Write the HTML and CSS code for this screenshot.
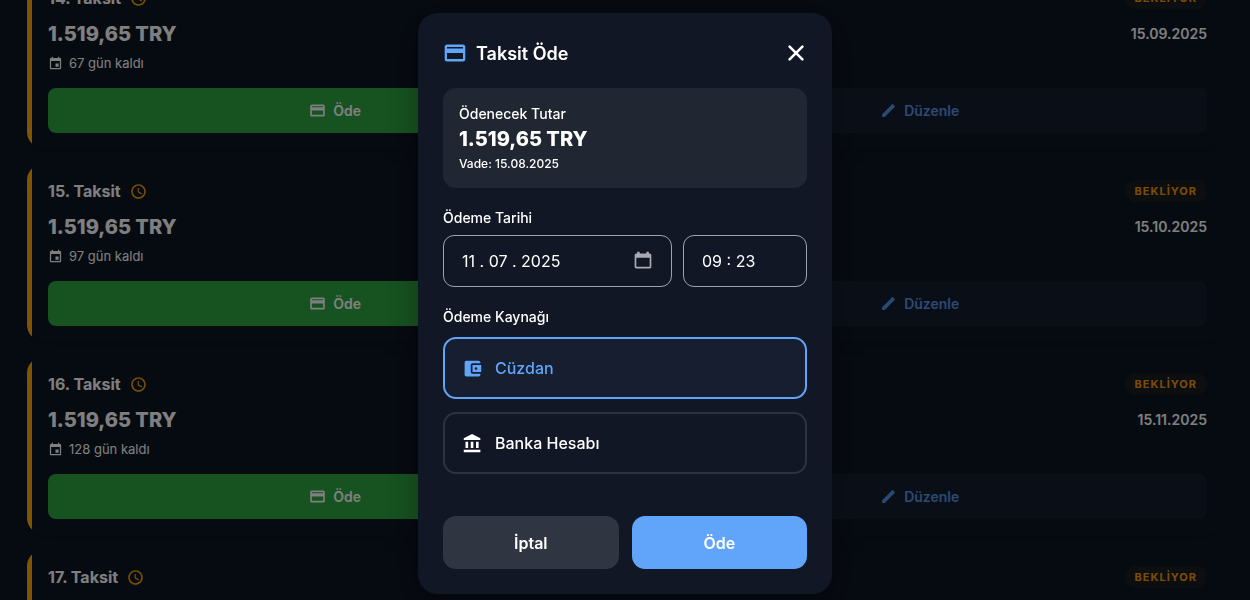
FILE: index.html
```html
<!DOCTYPE html>
<html lang="tr">
<head>
    <meta charset="UTF-8">
    <meta name="viewport" content="width=device-width, initial-scale=1.0">
    <title>Taksit Öde</title>
    <link rel="stylesheet" href="styles.css">
</head>
<body>

<!-- İkonlar -->
<svg class="sprite" aria-hidden="true">
    <symbol id="icon-card" viewBox="0 0 24 24"><path d="M20 3.500H4c-1.300 0-2.300 1-2.300 2.300v12.400c0 1.300 1 2.300 2.300 2.300h16c1.300 0 2.300-1 2.300-2.300V5.800c0-1.300-1-2.300-2.300-2.300zM20 18H4v-6h16v6zM20 7.500H4V6h16v1.500z"/></symbol>
    <symbol id="icon-clock" viewBox="0 0 24 24"><path d="M12 1.700C6.300 1.700 1.700 6.300 1.700 12S6.300 22.300 12 22.300 22.300 17.700 22.300 12 17.700 1.700 12 1.700zM12 20c-4.420 0-8-3.580-8-8s3.580-8 8-8 8 3.580 8 8-3.580 8-8 8zm.5-13H10.800v6l5.450 3.300.95-1.600-4.700-2.700z"/></symbol>
    <symbol id="icon-event" viewBox="0 0 24 24"><path d="M17 12h-5v5h5v-5zM16 1v2H8V1H6v2H5c-1.110 0-1.990.9-1.990 2L3 19c0 1.100.89 2 2 2h14c1.100 0 2-.9 2-2V5c0-1.100-.9-2-2-2h-1V1h-2zm3 18H5V8h14v11z"/></symbol>
    <symbol id="icon-edit" viewBox="0 0 24 24"><path d="M3 17.250V21h3.750L17.810 9.940l-3.750-3.750L3 17.250zM20.710 7.040c.39-.39.39-1.020 0-1.410l-2.340-2.340c-.39-.39-1.020-.39-1.410 0L14.060 6.190l3.750 3.750 2.900-2.900z"/></symbol>
    <symbol id="icon-close" viewBox="0 0 24 24"><path d="M5 5l14 14M19 5L5 19" fill="none" stroke="currentColor" stroke-width="2.8" stroke-linecap="round"/></symbol>
    <symbol id="icon-calendar" viewBox="0 0 24 24"><path d="M20 3h-1V1h-3v2H8V1H5v2H4c-1.100 0-2 .9-2 2v14c0 1.100.9 2 2 2h16c1.100 0 2-.9 2-2V5c0-1.100-.9-2-2-2zm0 16H4V8h16v11z"/></symbol>
    <symbol id="icon-wallet" viewBox="0 0 24 24"><path d="M21 18v1c0 1.100-.9 2-2 2H5c-1.110 0-2-.9-2-2V5c0-1.100.89-2 2-2h14c1.100 0 2 .9 2 2v1h-9c-1.110 0-2 .9-2 2v8c0 1.100.89 2 2 2h9zm-9-2h10V8H12v8zm4-2.500c-.83 0-1.500-.67-1.500-1.500s.67-1.500 1.500-1.500 1.500.67 1.500 1.500-.67 1.500-1.500 1.500z"/></symbol>
    <symbol id="icon-bank" viewBox="0 0 24 24"><path d="M4 10v7h3v-7H4zm6 0v7h3v-7h-3zM2 22h19v-3H2v3zm14-12v7h3v-7h-3zm-4.500-9L2 6v2h19V6l-9.500-5z"/></symbol>
</svg>

<!-- Taksit listesi -->
<main class="installments" id="installments"></main>

<!-- Ödeme penceresi -->
<div class="overlay">
    <form class="modal" id="pay-form" role="dialog" aria-labelledby="modal-title">
        <div class="modal-header">
            <svg class="modal-icon"><use href="#icon-card"/></svg>
            <h2 id="modal-title">Taksit Öde</h2>
            <button type="button" class="close-btn" aria-label="Kapat"><svg><use href="#icon-close"/></svg></button>
        </div>

        <div class="summary">
            <div class="summary-label">Ödenecek Tutar</div>
            <div class="summary-amount">1.519,65 TRY</div>
            <div class="summary-due">Vade: 15.08.2025</div>
        </div>

        <label class="field-label" for="pay-date">Ödeme Tarihi</label>
        <div class="date-row">
            <div class="input-box date-box">
                <input type="text" id="pay-date" name="date" value="11 . 07 . 2025">
                <button type="button" class="picker-btn" aria-label="Takvim"><svg><use href="#icon-calendar"/></svg></button>
            </div>
            <div class="input-box time-box">
                <input type="text" name="time" value="09 : 23" aria-label="Saat">
            </div>
        </div>

        <fieldset class="sources">
            <legend class="field-label">Ödeme Kaynağı</legend>
            <label class="source">
                <input type="radio" name="source" value="wallet" checked>
                <svg><use href="#icon-wallet"/></svg>
                <span>Cüzdan</span>
            </label>
            <label class="source">
                <input type="radio" name="source" value="bank">
                <svg><use href="#icon-bank"/></svg>
                <span>Banka Hesabı</span>
            </label>
        </fieldset>

        <div class="modal-actions">
            <button type="button" class="modal-btn cancel">İptal</button>
            <button type="submit" class="modal-btn confirm">Öde</button>
        </div>
    </form>
</div>

<script src="script.js"></script>
</body>
</html>
```

FILE: styles.css
```css
* {
    box-sizing: border-box;
}
body {
    margin: 0;
    height: 100vh;
    overflow: hidden;
    font-family: Inter, "Liberation Sans", sans-serif;
    background-color: #0d1623;
    color: #fff;
}
button, input {
    font-family: inherit;
    color: inherit;
}
button {
    cursor: pointer;
    border: none;
}
svg {
    fill: currentColor;
    flex: none;
}
.sprite {
    display: none;
}

/* Liste */
.installments {
    display: flex;
    flex-direction: column;
    gap: 16px;
    padding: 0 27px;
    margin-top: -29px;
}
.card {
    position: relative;
    overflow: hidden;
    padding: 16px 16px 15px 21px;
    border-radius: 16px;
    background-color: #0d1623;
    box-shadow: 0 4px 12px rgba(0, 0, 0, 0.08);
}
.card::before {
    content: "";
    position: absolute;
    top: 0;
    bottom: 0;
    left: 0;
    width: 5px;
    background-color: #ffa80f;
}
.card-head, .card-main, .card-info, .card-title {
    display: flex;
    align-items: center;
}
.card-head, .card-main {
    justify-content: space-between;
}
.card-head {
    height: 22px;
    margin-bottom: 12px;
}
.card-title {
    gap: 9px;
    margin: 0;
    font-size: 16px;
    font-weight: 700;
}
.card-title svg {
    width: 17px;
    height: 17px;
    color: #f59e0b;
}
.badge {
    padding: 0 10px;
    border-radius: 11px;
    font-size: 11px;
    line-height: 22px;
    font-weight: 700;
    letter-spacing: 1px;
    color: #f59e0b;
    background-color: rgba(245, 158, 11, 0.06);
}
.card-main {
    line-height: 26px;
    margin-bottom: 8px;
}
.amount {
    font-size: 20px;
    font-weight: 800;
}
.date {
    font-size: 14px;
    font-weight: 600;
}
.card-info {
    gap: 6px;
    margin-bottom: 17px;
    font-size: 13px;
    line-height: 16px;
}
.card-info svg {
    width: 15px;
    height: 15px;
}
.card-actions {
    display: grid;
    grid-template-columns: 1fr 1fr;
    gap: 10px;
}
.card-btn {
    display: flex;
    align-items: center;
    justify-content: center;
    gap: 7px;
    height: 45px;
    border-radius: 8px;
    font-size: 14px;
    font-weight: 600;
}
.card-btn svg {
    width: 17px;
    height: 17px;
}
.card-btn.pay {
    background-color: #2ea442;
}
.card-btn.edit {
    color: #5594e4;
    background-color: #151e2f;
}

/* Pencere */
.overlay {
    position: fixed;
    inset: 0;
    display: flex;
    justify-content: center;
    align-items: flex-start;
    padding: 13px 16px;
    background-color: rgba(0, 0, 0, 0.5);
}
.modal {
    width: 100%;
    max-width: 414px;
    padding: 25px;
    border-radius: 20px;
    background-color: #121726;
    box-shadow: 0 8px 32px rgba(0, 0, 0, 0.3);
}
.modal-header {
    display: flex;
    align-items: center;
    gap: 9px;
    height: 30px;
    margin-bottom: 20px;
}
.modal-header h2 {
    flex: 1;
    margin: 0;
    font-size: 18px;
    font-weight: 600;
}
.modal-icon {
    width: 24px;
    height: 24px;
    color: #60a5fa;
}
.close-btn {
    display: flex;
    padding: 0;
    background: none;
}
.close-btn svg {
    width: 22px;
    height: 22px;
}
.summary {
    padding: 16px;
    margin-bottom: 20px;
    border-radius: 13px;
    background-color: #202632;
}
.summary-label {
    font-size: 14px;
    line-height: 20px;
    font-weight: 500;
}
.summary-amount {
    font-size: 20px;
    line-height: 31px;
    font-weight: 800;
}
.summary-due {
    font-size: 12px;
    line-height: 17px;
    font-weight: 500;
}
.field-label {
    display: block;
    padding: 0;
    margin-bottom: 7px;
    font-size: 14px;
    line-height: 20px;
    font-weight: 500;
}
.date-row {
    display: flex;
    gap: 11px;
    margin-bottom: 20px;
}
.input-box {
    display: flex;
    align-items: center;
    height: 52px;
    padding: 0 18px;
    border: 1px solid #a0a3ac;
    border-radius: 11px;
}
.input-box input {
    flex: 1;
    width: 100%;
    min-width: 0;
    padding: 0;
    border: none;
    outline: none;
    background: none;
    font-size: 16px;
}
.date-box {
    flex: 1;
    min-width: 0;
}
.time-box {
    flex: none;
    width: 124px;
}
.picker-btn {
    display: flex;
    padding: 0;
    background: none;
    color: #a9acb4;
}
.picker-btn svg {
    width: 20px;
    height: 20px;
}
.sources {
    display: flex;
    flex-direction: column;
    gap: 13px;
    margin: 0 0 42px;
    padding: 0;
    border: none;
}
.sources .field-label {
    margin-bottom: 10px;
}
.source {
    display: flex;
    align-items: center;
    gap: 12px;
    height: 62px;
    padding: 0 17px;
    border: 2px solid #2d3240;
    border-radius: 13px;
    font-size: 16px;
    font-weight: 500;
    cursor: pointer;
}
.source input {
    position: absolute;
    opacity: 0;
}
.source svg {
    width: 21px;
    height: 21px;
}
.source:has(input:checked) {
    color: #60a5fa;
    border-color: #60a5fa;
    background-color: #161e30;
}
.modal-actions {
    display: grid;
    grid-template-columns: 1fr 1fr;
    gap: 13px;
}
.modal-btn {
    height: 53px;
    border-radius: 13px;
    font-size: 16px;
    font-weight: 600;
}
.modal-btn.cancel {
    background-color: #303542;
}
.modal-btn.confirm {
    background-color: #60a5fa;
}
```

FILE: script.js
```js
const installments = [
    { no: 14, date: "15.09.2025", days: 67 },
    { no: 15, date: "15.10.2025", days: 97 },
    { no: 16, date: "15.11.2025", days: 128 },
    { no: 17, date: "15.12.2025", days: 158 },
];

const list = document.querySelector("#installments");

installments.forEach(item => {
    const card = document.createElement("article");
    card.className = "card";
    card.innerHTML = `
        <div class="card-head">
            <h3 class="card-title">${item.no}. Taksit <svg><use href="#icon-clock"/></svg></h3>
            <span class="badge">BEKLİYOR</span>
        </div>
        <div class="card-main">
            <span class="amount">1.519,65 TRY</span>
            <span class="date">${item.date}</span>
        </div>
        <div class="card-info"><svg><use href="#icon-event"/></svg>${item.days} gün kaldı</div>
        <div class="card-actions">
            <button type="button" class="card-btn pay"><svg><use href="#icon-card"/></svg>Öde</button>
            <button type="button" class="card-btn edit"><svg><use href="#icon-edit"/></svg>Düzenle</button>
        </div>
    `;
    list.appendChild(card);
});

document.querySelector("#pay-form").addEventListener("submit", e => e.preventDefault());
```
